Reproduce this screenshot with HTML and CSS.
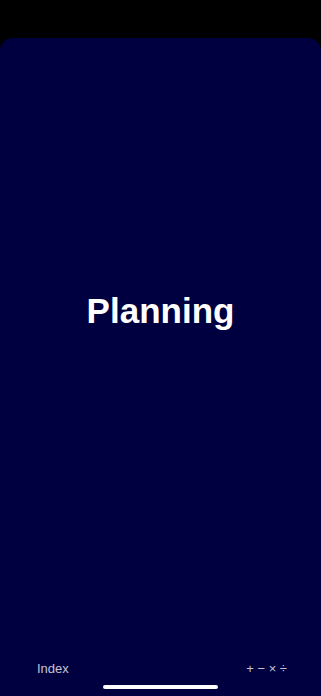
FILE: index.html
```html
<!DOCTYPE html>
<html lang="en">
<head>
    <meta charset="UTF-8">
    <title>Planning</title>
    <link rel="stylesheet" href="styles.css">
</head>
<body>
    <div class="screen">
        <div class="main">
            <h1 class="title">Planning</h1>
        </div>
        <div class="footer">
            <span class="link">Index</span>
            <span class="ops">+ − × ÷</span>
        </div>
        <div class="home-bar"></div>
    </div>
</body>
</html>
```
FILE: styles.css
```css
html, body {
    margin: 0;
    padding: 0;
    background: #000;
    height: 100%;
}
body {
    font-family: 'Liberation Sans', Arial, sans-serif;
    padding-top: 38px;
    box-sizing: border-box;
    display: flex;
    flex-direction: column;
}
.screen {
    flex: 1;
    background: #000040;
    border-radius: 13px 13px 0 0;
    display: flex;
    flex-direction: column;
}
.main {
    flex: 1;
    display: flex;
    align-items: center;
    justify-content: center;
    padding-bottom: 73px;
}
.title {
    margin: 0;
    color: #fff;
    font-size: 35px;
    font-weight: bold;
}
.footer {
    display: flex;
    justify-content: space-between;
    align-items: center;
    padding: 0 34px 0 37px;
    height: 22px;
    color: #c4c4d4;
    font-size: 13px;
}
.home-bar {
    width: 115px;
    height: 4px;
    border-radius: 2px;
    background: #fff;
    margin: 6px auto 7px;
}
```
